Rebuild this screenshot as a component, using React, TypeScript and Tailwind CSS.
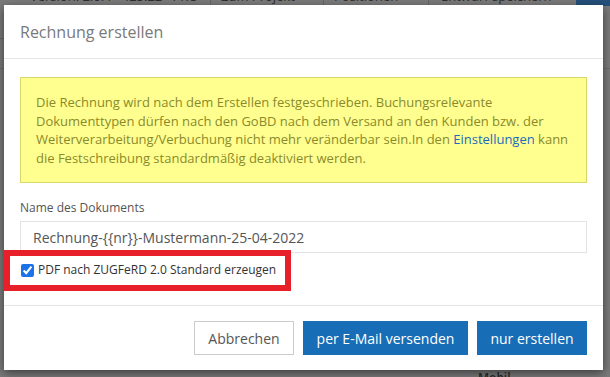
import React from "react";

const font = { fontFamily: '"Open Sans", "Noto Sans", sans-serif' };

function Backdrop() {
    return (
        <div className="absolute inset-0 bg-[#7a7a7a]">
            {/* dimmed toolbar of the page behind the dialog */}
            <div className="absolute left-0 top-[-14px] flex h-[20px] w-full text-[13px] text-[#2e2e2e]">
                <div className="flex w-[210px] items-end pl-[30px]">Version: 2.0.4 · 425.22 · PRO</div>
                <div className="flex w-[113px] items-end border-l border-[#666] pl-[10px]">Zum Projekt</div>
                <div className="flex w-[105px] items-end border-l border-[#666] pl-[10px]">Positionen</div>
                <div className="flex w-[148px] items-end border-l border-[#666] pl-[12px]">Entwurf speichern</div>
                <div className="flex-1 bg-[#24507a]" />
            </div>
            <div className="absolute left-0 top-[38px] h-px w-[6px] bg-[#666]" />
            <div className="absolute left-0 top-[68px] h-px w-full bg-[#6c6c6c]" />
            <div className="absolute left-[478px] top-[369px] text-[12px] font-semibold text-[#2a2a2a]">Mobil</div>
        </div>
    );
}

export default function App() {
    return (
        <div className="relative h-[377px] w-[610px] overflow-hidden" style={font}>
            <Backdrop />

            <div className="absolute left-[4px] top-[5px] flex w-[599px] flex-col bg-white shadow-[0_3px_9px_rgba(0,0,0,0.5)]">
                <div className="flex h-[54px] items-center border-b border-[#e5e5e5] px-4">
                    <h3 className="text-[16px] font-normal text-[#7a7a7a]">Rechnung erstellen</h3>
                </div>

                <div className="relative flex flex-col px-4 pb-[26px] pt-[18px]">
                    <div className="border border-[#d6d66a] bg-[#ffff8f] px-[15px] py-[15px] text-[13px] leading-[18.5px] text-[#8a8a2c]">
                        Die Rechnung wird nach dem Erstellen festgeschrieben. Buchungsrelevante Dokumenttypen dürfen nach den GoBD nach dem Versand an den Kunden bzw. der Weiterverarbeitung/Verbuchung nicht mehr veränderbar sein.In den{" "}
                        <a className="text-[#1a6bbd]">Einstellungen</a> kann die Festschreibung standardmäßig deaktiviert werden.
                    </div>

                    <label className="mt-[16px] text-[12px] leading-[17px] text-[#555]">Name des Dokuments</label>
                    <div className="mt-[5px] flex h-[32px] items-center border border-[#e3e3e3] px-[12px] text-[14px] text-[#555]">
                        Rechnung-{"{{nr}}"}-Mustermann-25-04-2022
                    </div>

                    <div className="mt-[8px] flex items-center gap-[4px] pl-[1px] text-[12px] text-[#333]">
                        <input type="checkbox" defaultChecked className="h-[13px] w-[13px] accent-[#1a73e8]" />
                        <span>PDF nach ZUGFeRD 2.0 Standard erzeugen</span>
                    </div>

                    {/* red highlight annotation */}
                    <div className="pointer-events-none absolute left-0 top-[191px] h-[41px] w-[287px] border-[6px] border-[#e8202a]" />
                </div>

                <div className="flex justify-end gap-[9px] border-t border-[#e5e5e5] px-4 pb-[15px] pt-[15px] text-[14px]">
                    <button className="h-[34px] w-[100px] border border-[#ccc] bg-white text-[#555]">Abbrechen</button>
                    <button className="h-[34px] w-[165px] bg-[#176db6] text-white">per E-Mail versenden</button>
                    <button className="h-[34px] w-[110px] bg-[#176db6] text-white">nur erstellen</button>
                </div>
            </div>
        </div>
    );
}
